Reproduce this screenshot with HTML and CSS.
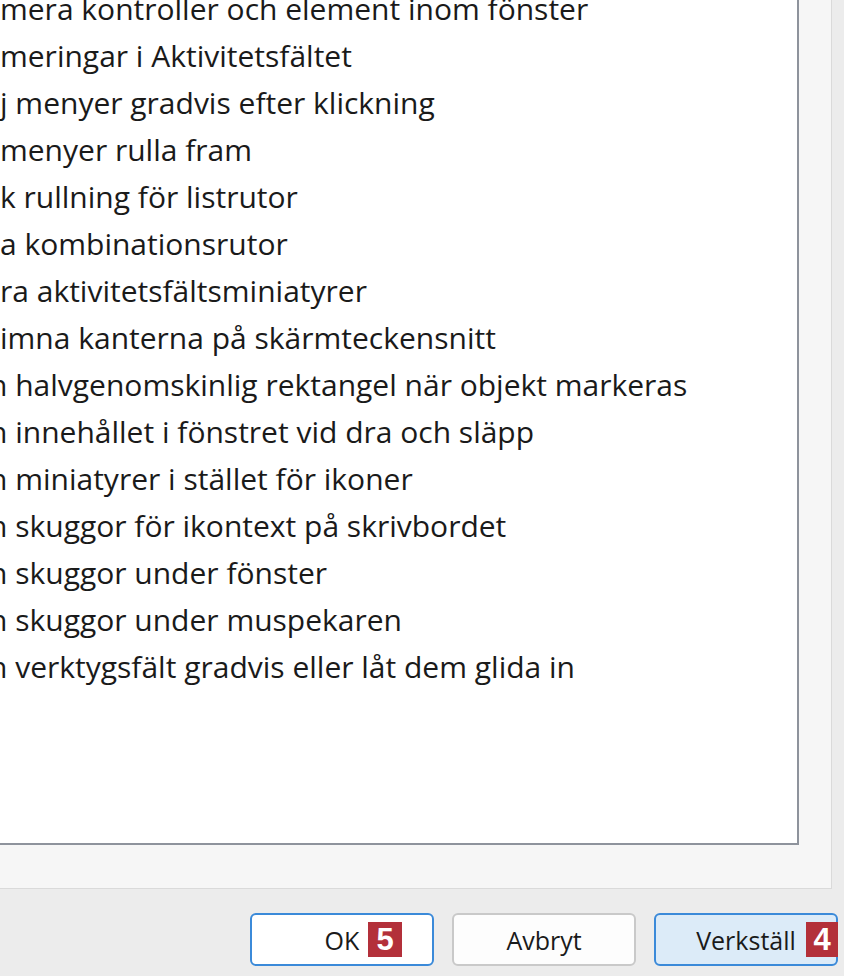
FILE: index.html
```html
<!DOCTYPE html>
<html lang="sv">
<head>
<meta charset="utf-8">
<title>Prestandaalternativ</title>
<link rel="stylesheet" href="styles.css">
</head>
<body>
<div class="panel">
  <div class="listbox">
    <ul class="options">
      <li>mera kontroller och element inom fönster</li>
      <li>meringar i Aktivitetsfältet</li>
      <li>j menyer gradvis efter klickning</li>
      <li>menyer rulla fram</li>
      <li>k rullning för listrutor</li>
      <li>a kombinationsrutor</li>
      <li>ra aktivitetsfältsminiatyrer</li>
      <li>imna kanterna på skärmteckensnitt</li>
      <li class="cut">n halvgenomskinlig rektangel när objekt markeras</li>
      <li class="cut">n innehållet i fönstret vid dra och släpp</li>
      <li class="cut">n miniatyrer i stället för ikoner</li>
      <li class="cut">n skuggor för ikontext på skrivbordet</li>
      <li class="cut">n skuggor under fönster</li>
      <li class="cut">n skuggor under muspekaren</li>
      <li class="cut">n verktygsfält gradvis eller låt dem glida in</li>
    </ul>
  </div>
</div>
<div class="footer">
  <button class="btn btn-default" type="button">OK<span class="badge">5</span></button>
  <button class="btn" type="button">Avbryt</button>
  <button class="btn btn-hover" type="button">Verkställ<span class="badge badge-right">4</span></button>
</div>
</body>
</html>
```
FILE: styles.css
```css
html, body {
  margin: 0;
  padding: 0;
}
body {
  width: 844px;
  height: 976px;
  overflow: hidden;
  background: #ececec;
  font-family: "Open Sans", "Noto Sans", sans-serif;
  color: #1a1a1a;
}
.panel {
  width: 799px;
  padding: 0 32px 43px 0;
  background: #f6f6f6;
  border-right: 1px solid #dadada;
  border-bottom: 1px solid #dadada;
}
.listbox {
  height: 843px;
  background: #ffffff;
  border-right: 2px solid #8e939c;
  border-bottom: 2px solid #8e939c;
  overflow: hidden;
}
.options {
  list-style: none;
  margin: -15px 0 0 0;
  padding: 0;
}
.options li {
  height: 47px;
  line-height: 47px;
  font-size: 30px;
  white-space: nowrap;
}
.options li.cut {
  text-indent: -11px;
}
.footer {
  display: flex;
  justify-content: flex-end;
  gap: 18px;
  padding: 24px 6px 0 0;
}
.btn {
  position: relative;
  width: 184px;
  height: 53px;
  border: 2px solid #c9c9c9;
  border-radius: 6px;
  background: #fdfdfd;
  font-family: "Open Sans", "Noto Sans", sans-serif;
  font-size: 25px;
  color: #1a1a1a;
  padding: 0;
}
.btn-default {
  border-color: #3b8ad9;
  background: #ffffff;
}
.btn-hover {
  border-color: #3b8ad9;
  background: #dcebf8;
}
.badge {
  position: absolute;
  left: 116px;
  top: 7px;
  width: 34px;
  height: 35px;
  background: #b3303a;
  color: #ffffff;
  font-family: "Liberation Sans", Arial, sans-serif;
  font-weight: bold;
  font-size: 31px;
  line-height: 36px;
  text-align: center;
}
.badge-right {
  left: auto;
  right: -2px;
  width: 32px;
}
```
